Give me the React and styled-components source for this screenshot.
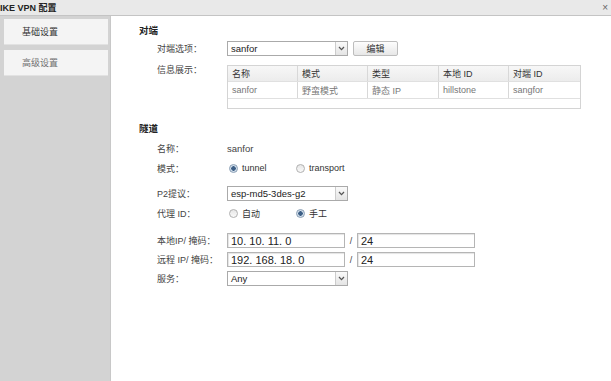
import styled, { createGlobalStyle } from "styled-components";

const Global = createGlobalStyle`
html,body{margin:0;padding:0;background:#fff;}
body{font-family:"Liberation Sans","Noto Sans CJK SC",Arial,sans-serif;color:#333;}
*{box-sizing:border-box;}
`;

const Frame = styled.div`
width:611px;
height:381px;
display:flex;
flex-direction:column;
overflow:hidden;
`;

const TitleBar = styled.div`
height:16px;
flex:none;
display:flex;
align-items:center;
justify-content:space-between;
padding:0 3px 0 0;
background:#e9e9e9;
border-bottom:1px solid #c4c4c4;
font-size:9px;
font-weight:bold;
color:#222;
`;

const Close = styled.span`
font-size:10px;
font-weight:normal;
color:#666;
`;

const Body = styled.div`
flex:1;
display:flex;
`;

const Sidebar = styled.div`
width:111px;
flex:none;
background:#d3d3d3;
border-right:1px solid #c8c8c8;
padding:3px 2px 0 4px;
display:flex;
flex-direction:column;
gap:5px;
`;

const Tab = styled.div`
height:26px;
background:#f4f4f4;
border-bottom:1px solid #e2e2e2;
font-size:9px;
line-height:26px;
padding-left:18px;
color:${p => (p.$active ? "#333" : "#6f6f6f")};
`;

const Content = styled.div`
flex:1;
padding:8px 0 0 28px;
display:flex;
flex-direction:column;
`;

const SectionTitle = styled.div`
height:14px;
line-height:14px;
font-size:9.5px;
font-weight:bold;
color:#222;
margin-top:${p => p.$mt || 0}px;
`;

const Row = styled.div`
display:flex;
align-items:${p => (p.$top ? "flex-start" : "center")};
height:${p => p.$h || 14}px;
margin-top:${p => p.$mt || 0}px;
padding-left:18px;
font-size:9px;
`;

const Label = styled.div`
width:70px;
flex:none;
color:#444;
line-height:${p => (p.$top ? "11px" : "normal")};
`;

const Value = styled.span`
color:#444;
font-size:9.5px;
`;

const SelectBox = styled.div`
width:${p => p.$w || 121}px;
height:15px;
border:1px solid #aaa;
background:#fff;
display:flex;
align-items:center;
font-size:9.5px;
color:#222;
`;

const SelectText = styled.span`
flex:1;
padding-left:3px;
`;

const Arrow = styled.div`
width:12px;
height:13px;
border-left:1px solid #ccc;
background:linear-gradient(#fafafa,#e4e4e4);
display:flex;
align-items:center;
justify-content:center;
`;

const Button = styled.div`
margin-left:5px;
width:45px;
height:15px;
border:1px solid #bdbdbd;
border-radius:2px;
background:linear-gradient(#fdfdfd,#e7e7e7);
font-size:9px;
color:#333;
display:flex;
align-items:center;
justify-content:center;
`;

const Table = styled.div`
width:354px;
height:44px;
border:1px solid #d4d4d4;
`;

const TRow = styled.div`
display:grid;
grid-template-columns:70px 70px 71px 70px 1fr;
height:${p => (p.$head ? 16 : 17)}px;
background:${p => (p.$head ? "linear-gradient(#f7f7f7,#ececec)" : "#fff")};
border-bottom:1px solid #e0e0e0;
`;

const Cell = styled.div`
border-right:1px solid #d8d8d8;
padding-left:4px;
display:flex;
align-items:center;
font-size:9px;
color:${p => (p.$head ? "#333" : "#777")};
&:last-child{border-right:none;}
`;

const RadioGroup = styled.div`
display:flex;
align-items:center;
`;

const RadioItem = styled.label`
width:67px;
display:flex;
align-items:center;
gap:4px;
padding-left:2px;
font-size:9px;
color:#333;
`;

const Dot = styled.span`
width:9px;
height:9px;
border-radius:50%;
border:1px solid ${p => (p.$on ? "#8a9fb5" : "#b0b0b0")};
background:${p => (p.$on ? "radial-gradient(circle,#3d5f86 0 2px,#d3dfeb 2.5px)" : "linear-gradient(#e6e6e6,#fafafa)")};
flex:none;
`;

const Input = styled.div`
width:${p => p.$w || 118}px;
height:15px;
border:1px solid #b5b5b5;
box-shadow:inset 1px 1px 1px #e4e4e4;
font-size:11px;
color:#222;
padding-left:3px;
display:flex;
align-items:center;
`;

const Slash = styled.span`
width:12px;
text-align:center;
font-size:9px;
color:#444;
`;

function Chevron() {
  return (
    <svg width="7" height="5" viewBox="0 0 7 5">
      <path d="M1 1 L3.5 3.6 L6 1" fill="none" stroke="#555" strokeWidth="1.3" />
    </svg>
  );
}

function Select({ value, w }) {
  return (
    <SelectBox $w={w}>
      <SelectText>{value}</SelectText>
      <Arrow><Chevron /></Arrow>
    </SelectBox>
  );
}

function Radio({ on, children }) {
  return (
    <RadioItem>
      <Dot $on={on} />
      {children}
    </RadioItem>
  );
}

const heads = ["名称", "模式", "类型", "本地 ID", "对端 ID"];
const cells = ["sanfor", "野蛮模式", "静态 IP", "hillstone", "sangfor"];

export default function App() {
  return (
    <Frame>
      <Global />
      <TitleBar>
        <span>IKE VPN 配置</span>
        <Close>×</Close>
      </TitleBar>
      <Body>
        <Sidebar>
          <Tab $active>基础设置</Tab>
          <Tab>高级设置</Tab>
        </Sidebar>
        <Content>
          <SectionTitle>对端</SectionTitle>
          <Row $h={15} $mt={3}>
            <Label>对端选项：</Label>
            <Select value="sanfor" />
            <Button>编辑</Button>
          </Row>
          <Row $h={44} $mt={9} $top>
            <Label $top>信息展示：</Label>
            <Table>
              <TRow $head>
                {heads.map(h => <Cell $head key={h}>{h}</Cell>)}
              </TRow>
              <TRow>
                {cells.map(c => <Cell key={c}>{c}</Cell>)}
              </TRow>
            </Table>
          </Row>
          <SectionTitle $mt={13}>隧道</SectionTitle>
          <Row $mt={5}>
            <Label>名称：</Label>
            <Value>sanfor</Value>
          </Row>
          <Row $mt={6}>
            <Label>模式：</Label>
            <RadioGroup>
              <Radio on>tunnel</Radio>
              <Radio>transport</Radio>
            </RadioGroup>
          </Row>
          <Row $h={15} $mt={11}>
            <Label>P2提议：</Label>
            <Select value="esp-md5-3des-g2" />
          </Row>
          <Row $mt={5}>
            <Label>代理 ID：</Label>
            <RadioGroup>
              <Radio>自动</Radio>
              <Radio on>手工</Radio>
            </RadioGroup>
          </Row>
          <Row $h={15} $mt={13}>
            <Label>本地IP/ 掩码：</Label>
            <Input>10. 10. 11. 0</Input>
            <Slash>/</Slash>
            <Input>24</Input>
          </Row>
          <Row $h={15} $mt={4}>
            <Label>远程 IP/ 掩码：</Label>
            <Input>192. 168. 18. 0</Input>
            <Slash>/</Slash>
            <Input>24</Input>
          </Row>
          <Row $h={15} $mt={4}>
            <Label>服务：</Label>
            <Select value="Any" />
          </Row>
        </Content>
      </Body>
    </Frame>
  );
}
